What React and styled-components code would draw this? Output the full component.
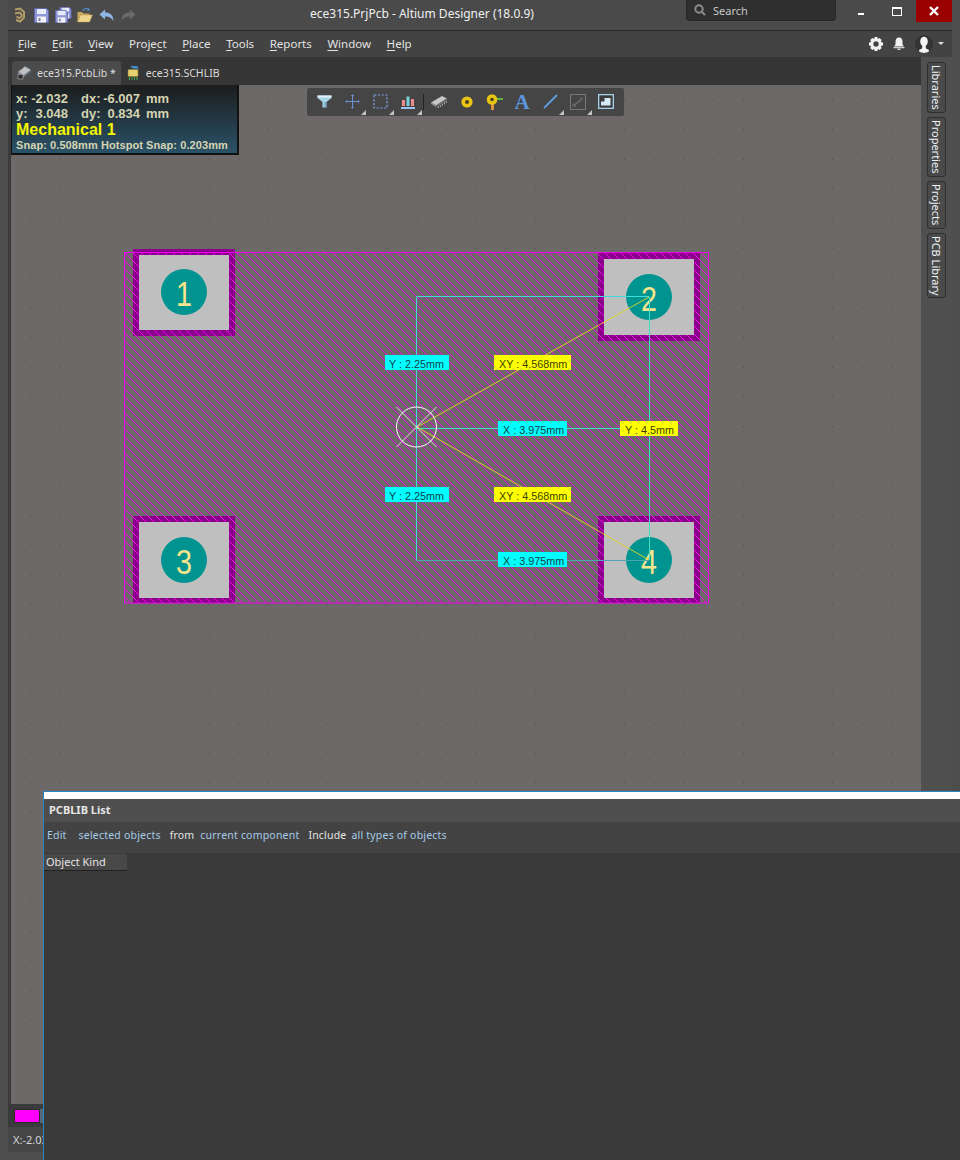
import React from "react";
import styled, { createGlobalStyle } from "styled-components";

const GlobalStyle = createGlobalStyle`
  html, body {
    margin: 0;
    height: 1160px;
    overflow: hidden;
    background: #4d4d4d;
    font-family: "Noto Sans", "Open Sans", sans-serif;
  }
`;

const Page = styled.div`
  position: relative;
  width: 960px;
  height: 1160px;
  overflow: hidden;
  background: #4d4d4d;
  padding: 0 8px;
  box-sizing: border-box;
`;

const Shell = styled.div`
  width: 944px;
  height: 1152px;
  display: flex;
  flex-direction: column;
`;

const TitleBar = styled.div`
  position: relative;
  flex: none;
  height: 30px;
  display: flex;
  align-items: flex-start;
  background: #4a4a4a;
  border-bottom: 1px solid #282828;
`;

const QuickIcons = styled.div`
  display: flex;
  align-items: center;
  height: 30px;
  padding-left: 5px;
`;

const QuickSlot = styled.span`
  display: flex;
  width: ${(p) => p.$w}px;
`;

const TitleText = styled.div`
  position: absolute;
  left: 302px;
  top: 5px;
  font-size: 12px;
  line-height: 18px;
  color: #f0f0f0;
`;

const SearchBox = styled.div`
  margin-left: auto;
  margin-right: 22px;
  width: 150px;
  height: 21px;
  box-sizing: border-box;
  display: flex;
  align-items: center;
  gap: 7px;
  padding-left: 7px;
  background: #2f2f2f;
  border: 1px solid #262626;
  border-top: 0;
  border-radius: 0 0 4px 4px;
  color: #c8c8c8;
  font-size: 11px;
`;

const WinButton = styled.div`
  width: ${(p) => p.$w}px;
  margin-left: ${(p) => p.$ml || 0}px;
  height: 22px;
  display: flex;
  align-items: center;
  justify-content: center;
  background: ${(p) => (p.$close ? "#9b0000" : "transparent")};
`;

const MinGlyph = styled.span`
  width: 6px;
  height: 2px;
  margin-top: 6px;
  background: #fff;
`;

const MaxGlyph = styled.span`
  flex: none;
  width: 8px;
  height: 6px;
  border: 1px solid #fff;
  border-top-width: 2px;
`;

const MenuBar = styled.div`
  flex: none;
  height: 26px;
  box-sizing: border-box;
  display: flex;
  align-items: center;
  padding: 0 0 1px 10px;
  background: #434343;
`;

const MenuItem = styled.span`
  margin-right: 15.6px;
  font-size: 11.5px;
  color: #e2e2e2;

  u {
    text-underline-offset: 2px;
  }
`;

const MenuTools = styled.div`
  margin-left: auto;
  display: flex;
  align-items: center;
  gap: 10px;
`;

const Avatar = styled.span`
  width: 18px;
  height: 18px;
  border-radius: 50%;
  background: #333;
  display: flex;
  justify-content: center;
  overflow: hidden;
`;

const Caret = styled.span`
  width: 0;
  height: 0;
  margin: 0 8px 0 -5px;
  border-left: 3px solid transparent;
  border-right: 3px solid transparent;
  border-top: 3px solid #ddd;
`;

const Main = styled.div`
  flex: 1;
  min-height: 0;
  display: flex;
`;

const Center = styled.div`
  flex: 1;
  min-width: 0;
  display: flex;
  flex-direction: column;
  background: #3b3b3b;
`;

const TabStrip = styled.div`
  flex: none;
  height: 28px;
  display: flex;
  align-items: flex-end;
  padding-left: 4px;
  background: #363636;
`;

const DocTab = styled.div`
  height: 24px;
  box-sizing: border-box;
  display: flex;
  align-items: center;
  gap: 5px;
  padding: 0 5px 1px;
  border-radius: 3px 3px 0 0;
  background: ${(p) => (p.$active ? "#4b4b4b" : "transparent")};
  font-size: 10.5px;
  color: #dcdcdc;
`;

const CanvasArea = styled.div`
  position: relative;
  flex: none;
  height: 1019px;
  margin-left: 3px;
  background: #6d6968;
  overflow: hidden;

  > svg {
    display: block;
  }
`;

const InfoPanel = styled.div`
  position: absolute;
  left: 0;
  top: 0;
  width: 228px;
  height: 70px;
  box-sizing: border-box;
  padding: 6px 0 0 4px;
  background: linear-gradient(#1c1c1c, #2a5268);
  border: solid #111;
  border-width: 0 2px 2px 1px;
  font-family: "Liberation Sans", Arial, sans-serif;
  font-weight: 700;
  color: #d6d4b2;
`;

const InfoGrid = styled.div`
  display: grid;
  grid-template-columns: 16px 36px 37px 35px auto;
  font-size: 13px;
  line-height: 15px;
  justify-items: end;
`;

const InfoLabel = styled.span`
  justify-self: start;
  padding-left: ${(p) => p.$pad || 0}px;
`;

const InfoUnit = styled.span`
  justify-self: start;
  padding-left: 6px;
`;

const LayerName = styled.div`
  font-size: 16px;
  line-height: 18px;
  color: #f4f400;
`;

const SnapLine = styled.div`
  font-size: 11px;
  line-height: 13px;
  letter-spacing: 0.08px;
`;

const FloatBar = styled.div`
  position: absolute;
  left: 296px;
  top: 3px;
  width: 317px;
  height: 28px;
  box-sizing: border-box;
  display: flex;
  padding-left: 3px;
  background: #454545;
  border-radius: 2px;
`;

const BarButton = styled.div`
  position: relative;
  width: ${(p) => p.$w || 28}px;
  height: 27px;
  display: flex;
  align-items: center;
  justify-content: center;

  ${(p) =>
    p.$corner &&
    `&::after {
      content: "";
      position: absolute;
      right: 0;
      bottom: 0;
      border-left: 5px solid transparent;
      border-bottom: 5px solid #c4c4c4;
    }`}
`;

const BarDivider = styled.span`
  flex: none;
  width: 1px;
  height: 16px;
  margin: 6px 1px 0 1px;
  background: #222;
`;

const SerifGlyph = styled.span`
  font-family: "Liberation Serif", serif;
  font-weight: 700;
  font-size: 21px;
  line-height: 22px;
  color: #5b97dc;
`;

const LayerStrip = styled.div`
  flex: none;
  height: 23px;
  display: flex;
  align-items: center;
  padding-left: 6px;
  background: #3a3a3a;
`;

const LayerSwatch = styled.span`
  width: 24px;
  height: 12px;
  background: #ff00ff;
  border: 1px solid #2a2a2a;
`;

const LayerSliver = styled.span`
  width: 6px;
  height: 14px;
  background: #54697a;
`;

const StatusBar = styled.div`
  flex: 1;
  display: flex;
  align-items: center;
  padding-left: 5px;
  background: #454545;
  font-size: 11px;
  color: #d4d4d4;
`;

const Dock = styled.div`
  flex: none;
  width: 31px;
  display: flex;
  flex-direction: column;
  gap: 4px;
  box-sizing: border-box;
  padding: 5px 0 0 6px;
  background: #505050;
`;

const DockTab = styled.div`
  width: 19px;
  height: ${(p) => p.$h}px;
  box-sizing: border-box;
  display: flex;
  align-items: center;
  justify-content: center;
  writing-mode: vertical-rl;
  background: #4a4a4a;
  border: 1px solid #2e2e2e;
  border-radius: 3px;
  font-size: 11px;
  color: #eef2f6;
`;

const ListPanel = styled.div`
  position: absolute;
  left: 43px;
  right: 0;
  top: 791px;
  bottom: 0;
  display: flex;
  flex-direction: column;
  background: #3a3a3a;
  border-left: 1px solid #2b84c6;
  border-top: 1px solid #2b84c6;
`;

const WhiteBar = styled.div`
  flex: none;
  height: 7px;
  background: #fff;
`;

const ListHeader = styled.div`
  flex: none;
  height: 23px;
  box-sizing: border-box;
  display: flex;
  align-items: center;
  padding: 0 0 3px 5px;
  background: #4e4e4e;
  font-size: 11px;
  font-weight: 700;
  color: #e6e6e6;
`;

const ListActions = styled.div`
  flex: none;
  height: 31px;
  box-sizing: border-box;
  display: flex;
  align-items: center;
  padding: 0 0 6px 3px;
  background: #434343;
  font-size: 10.5px;
  letter-spacing: 0.2px;
`;

const ActionText = styled.span`
  margin-left: ${(p) => p.$ml || 0}px;
  color: ${(p) => (p.$plain ? "#e4e4e4" : "#a6cbe8")};
`;

const ColumnHead = styled.div`
  width: 83px;
  height: 17px;
  margin-top: 1px;
  box-sizing: border-box;
  padding-left: 2px;
  background: #484848;
  border-bottom: 1px solid #222;
  font-size: 11px;
  line-height: 16px;
  color: #e4e4e4;
`;

const PadDigit = styled.text`
  font-family: "Liberation Sans", Arial, sans-serif;
  font-size: 35px;
  fill: #f6e58c;
  text-anchor: middle;
`;

const LabelText = styled.text`
  font-family: "Liberation Sans", Arial, sans-serif;
  font-size: 10.8px;
  fill: ${(p) => (p.$yellow ? "#3d3d00" : "#0e4248")};
`;

const LogoIcon = () => (
  <svg width="13" height="16" viewBox="0 0 13 16" fill="none" stroke="#b19c66" strokeWidth="2">
    <path d="M2 2.5 L7 1.5 L11 5 V10.5 L7 14.5 L3 13" />
    <path d="M2 6.5 L6.5 5.5 L8.5 7.5 V9.5 L6 11 L3.5 9.5" />
  </svg>
);

const FloppyShape = () => (
  <>
    <path d="M0.5 0.5 H12.5 L14.5 2.5 V14.5 H0.5 Z" fill="#8d96d6" stroke="#5e66a8" />
    <rect x="3" y="1" width="9" height="5" fill="#e8ecfa" />
    <rect x="3" y="8.5" width="9" height="6" fill="#f2f2f6" />
    <rect x="4.5" y="10" width="2" height="3" fill="#7a7a9a" />
  </>
);

const SaveIcon = () => (
  <svg width="15" height="15" viewBox="0 0 15 15">
    <FloppyShape />
  </svg>
);

const SaveAllIcon = () => (
  <svg width="17" height="16" viewBox="0 0 17 16">
    <g transform="translate(4.5 0) scale(0.8)">
      <FloppyShape />
    </g>
    <g transform="translate(0 3) scale(0.87)">
      <FloppyShape />
    </g>
  </svg>
);

const OpenIcon = () => (
  <svg width="16" height="16" viewBox="0 0 16 16">
    <path d="M6 4 C7 1 10 0.5 12 2.5" fill="none" stroke="#4f86b8" strokeWidth="1.3" />
    <path d="M11 0.5 L13.5 3.5 L10 4 Z" fill="#4f86b8" />
    <path d="M0.5 5 H5 L6.5 6.5 H12.5 V8 H3.5 L0.5 15 Z" fill="#c9a85e" />
    <path d="M3.5 8 H15.5 L12.5 15 H0.5 Z" fill="#eed58e" stroke="#b99a54" strokeWidth="0.5" />
  </svg>
);

const UndoIcon = ({ color }) => (
  <svg width="15" height="13" viewBox="0 0 15 13">
    <path d="M0.5 5.5 L6 0.5 V3.5 C11 3.5 14.5 6 14.5 12.5 C13 9 10.5 7.5 6 7.5 V10.5 Z" fill={color} />
  </svg>
);

const RedoIcon = ({ color }) => (
  <svg width="15" height="13" viewBox="0 0 15 13">
    <path d="M14.5 5.5 L9 0.5 V3.5 C4 3.5 0.5 6 0.5 12.5 C2 9 4.5 7.5 9 7.5 V10.5 Z" fill={color} />
  </svg>
);

const SearchIcon = () => (
  <svg width="12" height="12" viewBox="0 0 12 12" fill="none" stroke="#8c8c8c" strokeWidth="2">
    <circle cx="5" cy="5" r="3.7" />
    <path d="M8 8 L11 11" />
  </svg>
);

const CloseIcon = () => (
  <svg width="10" height="10" viewBox="0 0 10 10" stroke="#fff" strokeWidth="2.4">
    <path d="M1 1 L9 9 M9 1 L1 9" />
  </svg>
);

const GearIcon = () => (
  <svg width="14" height="14" viewBox="0 0 14 14">
    <path
      fill="#f2f2f2"
      fillRule="evenodd"
      d="M5.6 0 H8.4 L8.8 1.9 L10.6 1 L12.6 3 L11.7 4.9 L14 5.5 V8.5 L11.8 9 L12.6 11 L10.7 12.9 L8.8 12 L8.4 14 H5.6 L5.1 12 L3.2 12.9 L1.3 11 L2.2 9.1 L0 8.5 V5.5 L2.2 5 L1.3 3 L3.2 1.1 L5.2 2 Z M7 4.3 A2.7 2.7 0 1 0 7 9.7 A2.7 2.7 0 1 0 7 4.3 Z"
    />
  </svg>
);

const BellIcon = () => (
  <svg width="12" height="13" viewBox="0 0 12 13" fill="#f2f2f2">
    <path d="M6 0.5 C8.5 0.5 9.5 2.5 9.5 5 V7.5 L11 9.5 H1 L2.5 7.5 V5 C2.5 2.5 3.5 0.5 6 0.5 Z" />
    <rect x="0.5" y="10.2" width="11" height="1" />
    <rect x="4.5" y="11.6" width="3" height="1.2" />
  </svg>
);

const PersonIcon = () => (
  <svg width="12" height="18" viewBox="0 0 12 18" fill="#f4f4f4">
    <ellipse cx="6" cy="6.5" rx="3.8" ry="4.8" />
    <path d="M4.5 10 H7.5 L8 13.5 L11 15 V18 H1 V15 L4 13.5 Z" />
  </svg>
);

const ChipTabIcon = () => (
  <svg width="15" height="15" viewBox="0 0 15 15">
    <path d="M1 7 L8 1.5 L14 5 L7 10.5 Z" fill="#c0c0c0" stroke="#7a8a9a" strokeWidth="0.6" />
    <path d="M1 7 V9 L7 12.5 V10.5 Z" fill="#7c8894" />
    <path d="M7 10.5 V12.5 L14 7 V5 Z" fill="#5d6874" />
    <rect x="1" y="9.5" width="5" height="4.5" fill="#2e2e2e" stroke="#aaa" strokeWidth="0.6" />
  </svg>
);

const SchTabIcon = () => (
  <svg width="15" height="16" viewBox="0 0 15 16">
    <path d="M4 1 H11 L13 3.5 H7 Z" fill="#3f8fd0" />
    <rect x="2" y="4.5" width="10" height="7" rx="1" fill="#e8cf70" stroke="#8a7a30" strokeWidth="0.6" />
    <path d="M3.5 12 V15 M6 12 V15 M8.5 12 V15 M11 12 V15" stroke="#4fa84f" strokeWidth="1" />
  </svg>
);

const FilterIcon = () => (
  <svg width="15" height="13" viewBox="0 0 15 13">
    <path d="M0.5 0.5 H14.5 V3 L9.5 7 V12.5 H5.5 V7 L0.5 3 Z" fill="#a8d4e8" />
    <path d="M0.5 0.5 H14.5 V2.5 H0.5 Z" fill="#dff0f8" />
    <path d="M9 7 V12.5 H7.5 V7 Z" fill="#6fa8c4" />
  </svg>
);

const CrossIcon = () => (
  <svg width="15" height="15" viewBox="0 0 15 15" stroke="#6c90d8" fill="none">
    <path d="M7.5 0.5 V14.5 M0.5 7.5 H14.5" />
    <path d="M6 1.5 H9 M6 13.5 H9 M1.5 6 V9 M13.5 6 V9" strokeWidth="0.8" />
  </svg>
);

const DashRectIcon = () => (
  <svg width="15" height="15" viewBox="0 0 15 15" fill="none">
    <rect x="1" y="1" width="13" height="13" stroke="#7f9fe6" strokeWidth="1.2" strokeDasharray="2.2 1.6" />
  </svg>
);

const BarsIcon = () => (
  <svg width="14" height="14" viewBox="0 0 14 14">
    <rect x="1" y="5" width="3" height="6" fill="#f08c8c" />
    <rect x="5.5" y="1.5" width="3" height="9.5" fill="#77d0d8" />
    <rect x="10" y="4" width="3" height="7" fill="#f08c8c" />
    <rect x="0" y="12" width="14" height="2" fill="#9ec6ee" />
  </svg>
);

const ChipIcon = () => (
  <svg width="18" height="14" viewBox="0 0 18 14">
    <path d="M1 7.5 L12 1 L17 3.5 L6 10.5 Z" fill="#c6c6c6" />
    <path d="M1 7.5 V9 L6 12 V10.5 Z" fill="#8c8c8c" />
    <path d="M6 10.5 V12 L17 5 V3.5 Z" fill="#6c6c6c" />
    <path d="M8 11 L8.5 13 M10 9.8 L10.5 11.8 M12 8.5 L12.5 10.5 M14 7.2 L14.5 9.2 M16 6 L16.5 8" stroke="#bdbdbd" />
  </svg>
);

const PadIcon = () => (
  <svg width="12" height="12" viewBox="0 0 12 12">
    <circle cx="6" cy="6" r="5.6" fill="#e9c414" />
    <circle cx="6" cy="6" r="2" fill="#4a4020" />
  </svg>
);

const ViaIcon = () => (
  <svg width="17" height="16" viewBox="0 0 17 16">
    <rect x="10" y="4" width="7" height="2" fill="#62b83a" />
    <rect x="5" y="9" width="3" height="7" fill="#d89540" />
    <circle cx="6" cy="5.5" r="5.3" fill="#e9c414" />
    <circle cx="6" cy="5.5" r="1.8" fill="#4a4020" />
  </svg>
);

const LineIcon = () => (
  <svg width="15" height="15" viewBox="0 0 15 15">
    <path d="M1 14 L14 1" stroke="#5f9be0" strokeWidth="1.8" />
  </svg>
);

const WrenchBoxIcon = () => (
  <svg width="16" height="16" viewBox="0 0 16 16" fill="none">
    <rect x="0.5" y="0.5" width="15" height="15" stroke="#777" />
    <path d="M4 11.5 L10.5 6" stroke="#6e6e6e" strokeWidth="1.6" />
    <circle cx="4" cy="11.5" r="1.3" stroke="#6e6e6e" />
    <path d="M9.5 4.5 L12.5 4 L11 7" stroke="#6e6e6e" />
  </svg>
);

const PlaneIcon = () => (
  <svg width="16" height="15" viewBox="0 0 16 15">
    <rect x="0.5" y="0.5" width="15" height="14" fill="#3c3c3c" stroke="#a6cfe8" strokeWidth="1.6" />
    <path d="M3 11.5 V7.5 H6.5 V4 H12.5 V11.5 Z" fill="#d4eaf6" />
  </svg>
);

const pads = [
  { n: "1", x: 133, y: 249, h: 87, gy: 255, gh: 75, cy: 292 },
  { n: "2", x: 598, y: 253, h: 88, gy: 259, gh: 76, cy: 297 },
  { n: "3", x: 133, y: 516, h: 87, gy: 522, gh: 76, cy: 560 },
  { n: "4", x: 598, y: 516, h: 87, gy: 522, gh: 76, cy: 560 },
];

const labels = [
  { text: "Y : 2.25mm", x: 385, y: 355, w: 64, tx: 4 },
  { text: "Y : 2.25mm", x: 385, y: 487, w: 64, tx: 4 },
  { text: "XY : 4.568mm", x: 494, y: 355, w: 77, tx: 5, yellow: true },
  { text: "XY : 4.568mm", x: 494, y: 487, w: 77, tx: 5, yellow: true },
  { text: "X : 3.975mm", x: 498, y: 421, w: 69, tx: 5 },
  { text: "X : 3.975mm", x: 498, y: 552, w: 69, tx: 5 },
  { text: "Y : 4.5mm", x: 620, y: 421, w: 58, tx: 5, yellow: true },
];

function Footprint() {
  return (
    <svg width="910" height="1019" viewBox="11 85 910 1019">
      <defs>
        <pattern id="grid" x="149" y="99.3" width="29.7" height="29.7" patternUnits="userSpaceOnUse">
          <rect width="1" height="1" fill="#4c4c50" />
        </pattern>
        <pattern id="hatch" x="0" y="0" width="8" height="8" patternUnits="userSpaceOnUse">
          <path d="M-1 -1 L9 9" stroke="#ee00ee" strokeWidth="1" />
        </pattern>
      </defs>
      <rect x="11" y="85" width="910" height="1019" fill="url(#grid)" />

      {pads.map((p) => (
        <rect key={p.n} x={p.x} y={p.y} width="102" height={p.h} fill="#8a008a" />
      ))}
      <rect x="124.5" y="252.5" width="584" height="350.5" fill="url(#hatch)" stroke="#f000f0" />
      {pads.map((p) => (
        <g key={p.n}>
          <rect x={p.x + 6} y={p.gy} width="90" height={p.gh} fill="#bfbfbf" />
          <circle cx={p.x + 51} cy={p.cy} r="23" fill="#009490" />
          <g transform={`translate(${p.x + 51} ${p.cy + 14}) scale(0.82 1)`}>
            <PadDigit>{p.n}</PadDigit>
          </g>
        </g>
      ))}

      <g fill="none" stroke="#3fdcdc">
        <path d="M416.5 428 V296.5 H649" />
        <path d="M416.5 428 V560.5" />
        <path d="M416.5 428.5 H649" />
        <path d="M649.5 297 V560" stroke="#40e0c8" />
        <path d="M416.5 560.5 H649" stroke="#4fa4b4" />
      </g>
      <path d="M417 427 L649 297 M417 427 L649 560" stroke="#e6d820" fill="none" strokeWidth="0.9" />

      <g fill="none" stroke="#fff">
        <circle cx="416.5" cy="427" r="20" />
        <path d="M396.5 407 L436.5 447 M436.5 407 L396.5 447" strokeWidth="0.8" />
      </g>

      {labels.map((l) => (
        <g key={`${l.text}${l.y}`}>
          <rect x={l.x} y={l.y} width={l.w} height="15" fill={l.yellow ? "#ffff00" : "#00ffff"} />
          <LabelText $yellow={l.yellow} x={l.x + l.tx} y={l.y + 13}>
            {l.text}
          </LabelText>
        </g>
      ))}
    </svg>
  );
}

export default function App() {
  return (
    <Page>
      <GlobalStyle />
      <Shell>
        <TitleBar>
          <QuickIcons>
            <QuickSlot $w={21}><LogoIcon /></QuickSlot>
            <QuickSlot $w={21}><SaveIcon /></QuickSlot>
            <QuickSlot $w={22}><SaveAllIcon /></QuickSlot>
            <QuickSlot $w={22}><OpenIcon /></QuickSlot>
            <QuickSlot $w={22}><UndoIcon color="#8db6e4" /></QuickSlot>
            <QuickSlot $w={16}><RedoIcon color="#6b6b6b" /></QuickSlot>
          </QuickIcons>
          <TitleText>ece315.PrjPcb - Altium Designer (18.0.9)</TitleText>
          <SearchBox>
            <SearchIcon />
            Search
          </SearchBox>
          <WinButton $w={6}><MinGlyph /></WinButton>
          <WinButton $w={10} $ml={28}><MaxGlyph /></WinButton>
          <WinButton $w={36} $ml={14} $close><CloseIcon /></WinButton>
        </TitleBar>

        <MenuBar>
          <MenuItem><u>F</u>ile</MenuItem>
          <MenuItem><u>E</u>dit</MenuItem>
          <MenuItem><u>V</u>iew</MenuItem>
          <MenuItem>Proje<u>c</u>t</MenuItem>
          <MenuItem><u>P</u>lace</MenuItem>
          <MenuItem><u>T</u>ools</MenuItem>
          <MenuItem><u>R</u>eports</MenuItem>
          <MenuItem><u>W</u>indow</MenuItem>
          <MenuItem><u>H</u>elp</MenuItem>
          <MenuTools>
            <GearIcon />
            <BellIcon />
            <Avatar><PersonIcon /></Avatar>
            <Caret />
          </MenuTools>
        </MenuBar>

        <Main>
          <Center>
            <TabStrip>
              <DocTab $active><ChipTabIcon />ece315.PcbLib *</DocTab>
              <DocTab><SchTabIcon />ece315.SCHLIB</DocTab>
            </TabStrip>
            <CanvasArea>
              <Footprint />
              <InfoPanel>
                <InfoGrid>
                  <InfoLabel>x:</InfoLabel><span>-2.032</span><InfoLabel $pad={13}>dx:</InfoLabel><span>-6.007</span><InfoUnit>mm</InfoUnit>
                  <InfoLabel>y:</InfoLabel><span>3.048</span><InfoLabel $pad={13}>dy:</InfoLabel><span>0.834</span><InfoUnit>mm</InfoUnit>
                </InfoGrid>
                <LayerName>Mechanical 1</LayerName>
                <SnapLine>Snap: 0.508mm Hotspot Snap: 0.203mm</SnapLine>
              </InfoPanel>
              <FloatBar>
                <BarButton><FilterIcon /></BarButton>
                <BarButton $corner><CrossIcon /></BarButton>
                <BarButton $corner><DashRectIcon /></BarButton>
                <BarButton $corner><BarsIcon /></BarButton>
                <BarDivider />
                <BarButton><ChipIcon /></BarButton>
                <BarButton><PadIcon /></BarButton>
                <BarButton $w={27}><ViaIcon /></BarButton>
                <BarButton><SerifGlyph>A</SerifGlyph></BarButton>
                <BarButton $corner><LineIcon /></BarButton>
                <BarButton $corner><WrenchBoxIcon /></BarButton>
                <BarButton><PlaneIcon /></BarButton>
              </FloatBar>
            </CanvasArea>
            <LayerStrip>
              <LayerSwatch />
              <LayerSliver />
            </LayerStrip>
            <StatusBar>X:-2.032</StatusBar>
          </Center>
          <Dock>
            <DockTab $h={51}>Libraries</DockTab>
            <DockTab $h={60}>Properties</DockTab>
            <DockTab $h={48}>Projects</DockTab>
            <DockTab $h={65}>PCB Library</DockTab>
          </Dock>
        </Main>
      </Shell>

      <ListPanel>
        <WhiteBar />
        <ListHeader>PCBLIB List</ListHeader>
        <ListActions>
          <ActionText>Edit</ActionText>
          <ActionText $ml={12}>selected objects</ActionText>
          <ActionText $ml={9} $plain>from</ActionText>
          <ActionText $ml={6}>current component</ActionText>
          <ActionText $ml={9} $plain>Include</ActionText>
          <ActionText $ml={5}>all types of objects</ActionText>
        </ListActions>
        <ColumnHead>Object Kind</ColumnHead>
      </ListPanel>
    </Page>
  );
}
